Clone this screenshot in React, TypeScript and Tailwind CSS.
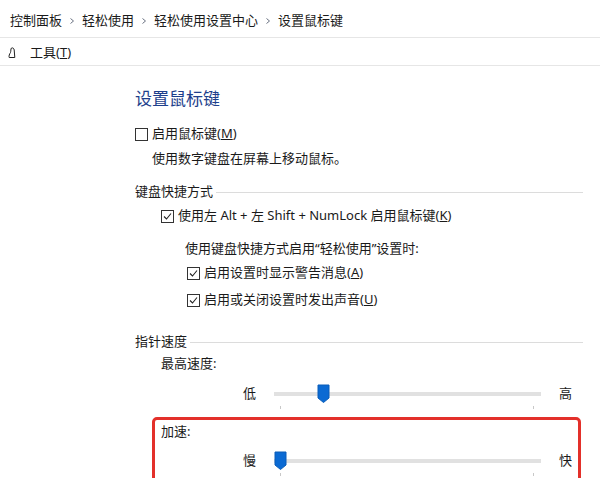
import React from 'react';

const font = { fontFamily: '"Noto Sans", "Noto Sans CJK SC", sans-serif' };

function Chevron() {
  return (
    <svg width="8" height="8" viewBox="0 0 8 8" className="mx-[6px] text-gray-500">
      <path d="M2.5 1.5 L5.5 4 L2.5 6.5" fill="none" stroke="currentColor" strokeWidth="1" />
    </svg>
  );
}

function Box({ checked }: { checked?: boolean }) {
  return (
    <span className="w-[13px] h-[13px] border border-[#333] bg-white shrink-0 flex items-center justify-center">
      {checked && (
        <svg width="11" height="11" viewBox="0 0 11 11">
          <path d="M2 5.5 L4.5 8 L9 2.5" fill="none" stroke="#222" strokeWidth="1.1" />
        </svg>
      )}
    </span>
  );
}

function Check({ checked, label, hot }: { checked?: boolean; label: string; hot: string }) {
  return (
    <div className="flex items-center gap-[4px] h-[26px]">
      <Box checked={checked} />
      <span>
        {label}(<span className="underline">{hot}</span>)
      </span>
    </div>
  );
}

function Group({ title, children }: { title: string; children: React.ReactNode }) {
  return (
    <div>
      <div className="flex items-center h-[20px] pr-[17px]">
        <span className="pr-[3px]">{title}</span>
        <div className="flex-1 h-px bg-[#dcdcdc]" />
      </div>
      {children}
    </div>
  );
}

function Slider({ low, high, pos }: { low: string; high: string; pos: number }) {
  return (
    <div className="flex items-center h-[28px]">
      <span className="w-[139px] pl-[108px]">{low}</span>
      <div className="relative w-[267px] h-[28px]">
        <div className="absolute left-0 right-0 top-[12px] h-[4px] bg-[#e1e1e1]" />
        <div className="absolute left-[6px] top-[26px] w-px h-[3px] bg-[#c8c8c8]" />
        <div className="absolute right-[7px] top-[26px] w-px h-[3px] bg-[#c8c8c8]" />
        <svg
          width="13"
          height="19"
          viewBox="0 0 13 19"
          className="absolute top-[4px]"
          style={{ left: pos }}
        >
          <path d="M1 1 H12 V14 L6.5 18.5 L1 14 Z" fill="#0b6ad3" stroke="#0a5db8" strokeWidth="1" />
        </svg>
      </div>
      <span className="pl-[18px]">{high}</span>
    </div>
  );
}

export default function App() {
  return (
    <div className="w-[600px] h-[478px] bg-white overflow-hidden text-[13px] text-[#1a1a1a]" style={font}>
      <div className="h-[38px] flex items-center pl-[10px] pt-[4px] border-b border-[#e6e6e6]">
        <span>控制面板</span>
        <Chevron />
        <span>轻松使用</span>
        <Chevron />
        <span>轻松使用设置中心</span>
        <Chevron />
        <span>设置鼠标键</span>
      </div>
      <div className="h-[28px] flex items-center pl-[6px] pt-[2px] border-b border-[#e6e6e6]">
        <svg width="24" height="14" viewBox="0 0 24 14" className="shrink-0">
          <path
            d="M5.5 2 C7 1.5 8 2.5 8.2 4 L8.8 11.5 L3.2 11.5 C2.6 10 3.5 8 4.5 6.5 C5 5 4.6 3 5.5 2 Z"
            fill="none"
            stroke="#222"
            strokeWidth="1"
          />
        </svg>
        <span>
          工具(<span className="underline">T</span>)
        </span>
      </div>

      <div className="pl-[135px]">
        <div className="text-[17px] text-[#1e3f8c] pt-[20px] h-[55px]">设置鼠标键</div>
        <Check label="启用鼠标键" hot="M" />
        <div className="pl-[17px] h-[26px] -mt-[1px] flex items-center">使用数字键盘在屏幕上移动鼠标。</div>
        <div className="h-[10px]" />
        <Group title="键盘快捷方式">
          <div className="pl-[26px] pt-[1px]">
            <Check checked label="使用左 Alt + 左 Shift + NumLock 启用鼠标键" hot="K" />
            <div className="pl-[24px] pt-[7px]">
              <div className="h-[26px] flex items-center">使用键盘快捷方式启用“轻松使用”设置时:</div>
              <div className="pl-[2px] -mt-[2px]">
                <Check checked label="启用设置时显示警告消息" hot="A" />
                <div className="h-px" />
                <Check checked label="启用或关闭设置时发出声音" hot="U" />
              </div>
            </div>
          </div>
        </Group>
        <div className="h-[19px]" />
        <Group title="指针速度">
          <div className="pl-[26px] h-[24px] flex items-center">最高速度:</div>
          <div className="pt-[4px]">
            <Slider low="低" high="高" pos={43} />
          </div>
        </Group>
      </div>

      <div className="ml-[152px] mr-[19px] mt-[9px] h-[80px] border-[3px] border-[#e3302a] rounded-[5px] pl-[6px]">
        <div className="h-[24px] flex items-center">加速:</div>
        <div className="pt-[3px] -ml-[26px]">
          <Slider low="慢" high="快" pos={0} />
        </div>
      </div>
    </div>
  );
}
